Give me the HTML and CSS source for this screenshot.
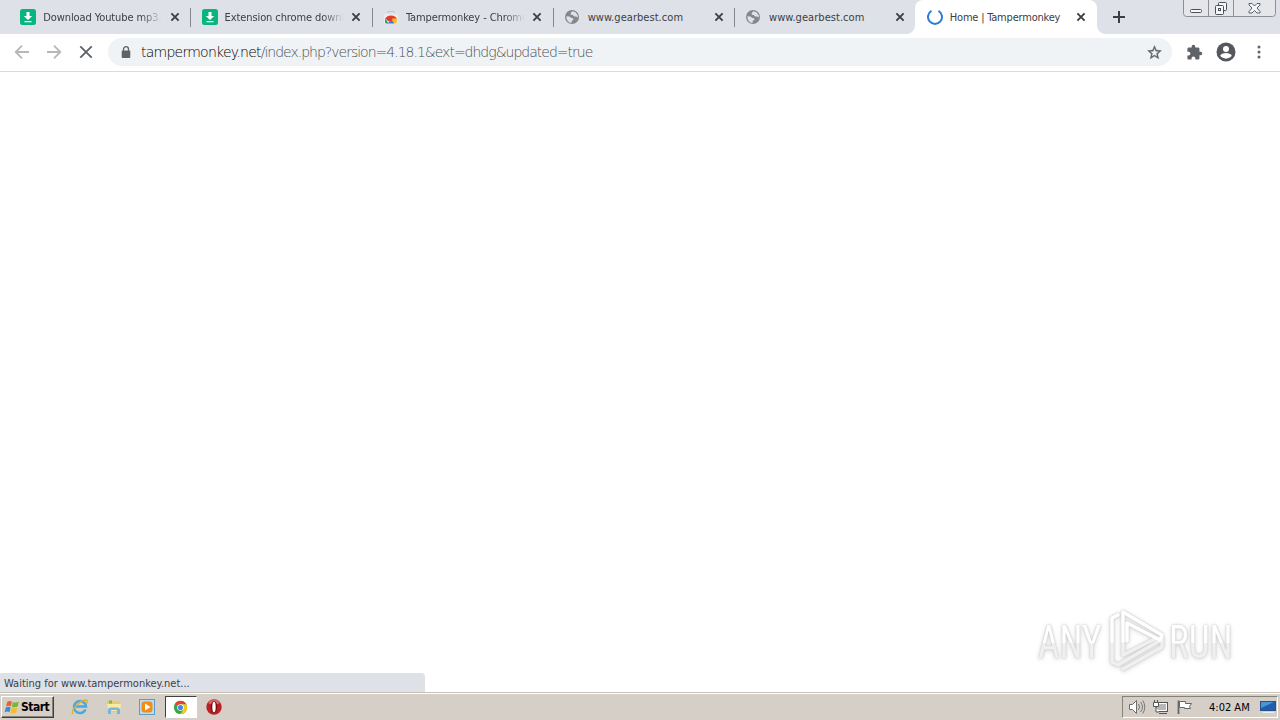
FILE: index.html
```html
<!DOCTYPE html>
<html lang="en">
<head>
  <meta charset="UTF-8">
  <title>Home | Tampermonkey</title>
  <link rel="stylesheet" href="styles.css">
</head>
<body>
  <svg class="defs" width="0" height="0">
    <symbol id="close" viewBox="0 0 10 10"><path d="M1.4 1.4l7.2 7.2M8.6 1.4L1.4 8.6" fill="none" stroke="#3c4043" stroke-width="1.9"/></symbol>
    <symbol id="download" viewBox="0 0 16 16"><rect width="16" height="16" rx="2.5" fill="#08b67d"/><path d="M6.5 3h3v4h2.7L8 11 3.8 7h2.7zM4.5 12h7v1.2h-7z" fill="#fff"/></symbol>
    <symbol id="globe" viewBox="0 0 16 16"><circle cx="8" cy="8" r="7" fill="#85888b"/><path d="M2.4 7.2l3 .2 2 1.6 1.9.3.1 1.5-1.6 1-.3 2.1C4.7 13.7 2.2 11.3 2.4 7.2zM8.3 2.3l3.2.9 2.3 3.2-.1 2.2-1.7-1.2-1.7.2-1.6-1.5-2-.4.2-1.9z" fill="#dee1e6"/></symbol>
  </svg>

  <div class="tabstrip">
    <div class="tab">
      <svg class="favicon"><use href="#download"/></svg>
      <span class="title fade">Download Youtube mp3,</span>
      <svg class="close"><use href="#close"/></svg>
    </div>
    <div class="tab">
      <svg class="favicon"><use href="#download"/></svg>
      <span class="title fade">Extension chrome downl</span>
      <svg class="close"><use href="#close"/></svg>
    </div>
    <div class="tab">
      <svg class="favicon" viewBox="0 0 16 16"><path d="M1 5h14v8.5a1.5 1.5 0 0 1-1.5 1.5h-11A1.5 1.5 0 0 1 1 13.5z" fill="#e9ebed"/><path d="M5 4V2.5h6V4" fill="none" stroke="#c2c5c9"/><path d="M2.3 9.5a6.5 5.5 0 0 1 11.5 0L11 12H5z" fill="#e23b2e"/><path d="M2.3 9.5l3.2 5H3a2 2 0 0 1-1-2z" fill="#23a455"/><path d="M9.5 9.5h4.3l.2 3.5-1.5 1.5H9z" fill="#fbc116"/><path d="M5.2 14.5a2.9 3.4 0 0 1 5.7 0z" fill="#397be6"/></svg>
      <span class="title fade">Tampermonkey - Chrome</span>
      <svg class="close"><use href="#close"/></svg>
    </div>
    <div class="tab">
      <svg class="favicon"><use href="#globe"/></svg>
      <span class="title wide">www.gearbest.com</span>
      <svg class="close"><use href="#close"/></svg>
    </div>
    <div class="tab">
      <svg class="favicon"><use href="#globe"/></svg>
      <span class="title wide">www.gearbest.com</span>
      <svg class="close"><use href="#close"/></svg>
    </div>
    <div class="tab active">
      <svg class="favicon" viewBox="0 0 16 16"><path d="M4.5 1.9A7 7 0 1 0 11.5 1.9" fill="none" stroke="#2f7bd6" stroke-width="2"/></svg>
      <span class="title">Home | Tampermonkey</span>
      <svg class="close"><use href="#close"/></svg>
    </div>
    <svg class="newtab" viewBox="0 0 12 12"><path d="M6 0v12M0 6h12" stroke="#3c4043" stroke-width="2"/></svg>
    <div class="window-buttons">
      <svg viewBox="0 0 93 17">
        <path d="M.5 0v13.5q0 3 3 3h86q3 0 3-3V0M25.5 0v16M50.5 0v16" fill="none" stroke="#8b8f98"/>
        <g fill="#f5f6f8" stroke="#4b505b">
          <rect x="7.5" y="9.5" width="11" height="3" rx="1"/>
          <rect x="35.5" y="2.5" width="8" height="8" rx="1"/>
          <rect x="32.5" y="5.5" width="8" height="9" rx="1"/>
          <rect x="35.5" y="8.5" width="2" height="2"/>
          <path d="M66 3.5h3l2.5 2.5L74 3.5h3v1.5L74 8l3 3.5V13h-3l-2.5-2.5L69 13h-3v-1.5L69 8l-3-3z" stroke-width=".9"/>
        </g>
      </svg>
    </div>
  </div>

  <div class="toolbar">
    <svg class="nav" viewBox="0 0 16 16"><path d="M15 8H2M8 1.7L1.7 8 8 14.3" fill="none" stroke="#b5b7b9" stroke-width="1.8"/></svg>
    <svg class="nav" viewBox="0 0 16 16"><path d="M1 8h13M8 1.7L14.3 8 8 14.3" fill="none" stroke="#b5b7b9" stroke-width="1.8"/></svg>
    <svg class="nav" viewBox="0 0 16 16"><path d="M2.3 2.3l11.4 11.4M13.7 2.3L2.3 13.7" fill="none" stroke="#5f6368" stroke-width="1.9"/></svg>
    <div class="omnibox">
      <svg class="lock" viewBox="0 0 10 13"><path d="M2.5 5V3.2a2.5 2.5 0 0 1 5 0V5" fill="none" stroke="#5f6368" stroke-width="1.3"/><rect x=".7" y="4.5" width="8.6" height="7.5" rx="1" fill="#5f6368"/></svg>
      <div class="url"><span class="host">tampermonkey.net</span><span class="path">/index.php?version=4.18.1&amp;ext=dhdg&amp;updated=true</span></div>
      <svg class="star" viewBox="0 0 24 24"><path d="M22 9.24l-7.19-.62L12 2 9.19 8.63 2 9.24l5.46 4.73L5.82 21 12 17.27 18.18 21l-1.63-7.03zM12 15.4l-3.76 2.27 1-4.28-3.32-2.88 4.38-.38L12 6.1l1.71 4.04 4.38.38-3.32 2.88 1 4.28z" fill="#5f6368" stroke="#5f6368" stroke-width=".4"/></svg>
    </div>
    <svg class="puzzle" viewBox="0 0 24 24"><path d="M20.5 11H19V7c0-1.100-.9-2-2-2h-4V3.500a2.500 2.500 0 0 0-5 0V5H4c-1.100 0-1.990.9-1.990 2v3.800H3.500a2.700 2.700 0 0 1 0 5.400H2V20c0 1.100.9 2 2 2h3.800v-1.500a2.700 2.700 0 0 1 5.400 0V22H17c1.100 0 2-.9 2-2v-4h1.500a2.500 2.500 0 0 0 0-5z" fill="#5f6368"/></svg>
    <svg class="profile" viewBox="0 0 20 20"><circle cx="10" cy="10" r="9.5" fill="#54585d"/><circle cx="10" cy="7" r="3" fill="#fff"/><path d="M4.2 13.7c1.4-3.6 10.2-3.6 11.6 0A7.2 7.2 0 0 1 4.2 13.7z" fill="#fff"/></svg>
    <svg class="more" viewBox="0 0 4 14"><g fill="#5f6368"><circle cx="2" cy="2" r="1.5"/><circle cx="2" cy="7" r="1.5"/><circle cx="2" cy="12" r="1.5"/></g></svg>
  </div>

  <div class="page">
    <div class="watermark">
      <span class="any">ANY</span>
      <svg viewBox="0 0 58 64">
        <g fill="none" stroke-width="3.5" stroke-linejoin="round" stroke-linecap="round">
          <path d="M4 32v21l6 3 41-24M15 32v14l34-17M15 60l39-22v-9" stroke="#f0f0f0"/>
          <path d="M15 32V3l39 23-2 5-33-17v18M4 32V9l6-3" stroke="#fff"/>
        </g>
      </svg>
      <span class="run">RUN</span>
    </div>
    <div class="status"><span>Waiting for www.tampermonkey.net...</span></div>
  </div>

  <div class="taskbar">
    <div class="start">
      <svg viewBox="0 0 17 16"><path d="M3.5 2.5Q6 .8 8.5 2.2L7.3 7.3Q5 6 2.2 7.5z" fill="#e8642a"/><path d="M9.5 2.6Q12.5 4 15.8 2.2L14.5 7.5Q11.5 9 8.3 7.7z" fill="#76b63c"/><path d="M2 8.5Q4.8 7 7 8.4L5.8 13.5Q3.5 12 .7 13.5z" fill="#3e87d4"/><path d="M8 8.8Q11 10 14.2 8.6L13 13.8Q9.8 15.5 6.8 14z" fill="#f5bd2b"/></svg>
      <span>Start</span>
    </div>
    <div class="launch">
      <svg viewBox="0 0 18 18"><path d="M14.5 11.5A6 6 0 1 1 15 8.5H5" fill="none" stroke="#4aa9de" stroke-width="2.5"/><path d="M2 16C-1 13 8 2.500 15 2c2 0 1.500 2 .8 3.500" fill="none" stroke="#e6ae28" stroke-width="1.3"/></svg>
    </div>
    <div class="launch">
      <svg viewBox="0 0 18 18"><path d="M2 3l5-1 1 1.500h7V14H2z" fill="#e9ca6b"/><path d="M4 2.500h3v3H4z" fill="#79b85a"/><path d="M2 6h14l-1 7H3z" fill="#faeaa1"/><path d="M3 16v-5l2-1.500h8l2 1.500v5h-3v-4H6v4z" fill="#74b7df"/></svg>
    </div>
    <div class="launch">
      <svg viewBox="0 0 18 18"><rect x="1.5" y="1.5" width="15" height="15" fill="#b9dcf4" stroke="#5b9dce"/><rect x="3.5" y="3.5" width="11" height="11" rx="3" fill="#f48b13"/><path d="M7 5.500v7L12.500 9z" fill="#fff"/></svg>
    </div>
    <div class="launch pressed">
      <svg viewBox="0 0 18 18"><circle cx="9" cy="9" r="7" fill="#37a64b"/><path d="M9 9L2.900 5.500A7 7 0 0 1 15.100 5.500H9z" fill="#df4435"/><path d="M9 5.500h6.100A7 7 0 0 1 9 16l3-5z" fill="#fbc71d"/><circle cx="9" cy="9" r="3.5" fill="#fff"/><circle cx="9" cy="9" r="2.7" fill="#4486e8"/></svg>
    </div>
    <div class="launch">
      <svg viewBox="0 0 18 18"><circle cx="9" cy="9" r="7.7" fill="#bb2023"/><path d="M3 5a7 7 0 0 1 12 0q-6 3-12 0z" fill="#d9696a"/><ellipse cx="9" cy="9" rx="3.2" ry="6" fill="#7a0b0e"/><ellipse cx="9" cy="9" rx="1.7" ry="5.3" fill="#fff"/></svg>
    </div>
    <div class="tray">
      <svg class="sound" viewBox="0 0 18 16"><path d="M1.5 5.5h3l4-4v13l-4-4h-3z" fill="#fff" stroke="#6d6d6d"/><path d="M10.5 5q2 3 0 6M12.5 3q4 5 0 10M14.8 1.5q4 6.5 0 13" fill="none" stroke="#777"/></svg>
      <svg class="network" viewBox="0 0 18 16"><rect x="4.5" y="3.5" width="11" height="9" fill="#b7b7b7" stroke="#555"/><path d="M5.5 4.5h9v7h-9" fill="none" stroke="#fff"/><path d="M7 14.5h8" stroke="#555"/><path d="M1.5 3.5h5v4h-5zM2.5 1v2M5.5 1v2M4 8v5h3" fill="#fff" stroke="#555"/></svg>
      <svg class="flag" viewBox="0 0 18 16"><path d="M2.5 15V1.5" stroke="#666" stroke-width="1.8"/><path d="M3.5 2.5h6v2h6l-2 3 1 2H8.5v-1h-5z" fill="#fff" stroke="#666"/></svg>
      <span>4:02 AM</span>
      <svg class="desktop" viewBox="0 0 16 14"><rect x=".5" y="1.5" width="15" height="9" fill="#1c5fae" stroke="#2b4f87"/><path d="M1 2h13L1 8z" fill="#4c94d8"/><path d="M3 12.5h11" stroke="#e9eef4"/></svg>
    </div>
  </div>
</body>
</html>
```

FILE: styles.css
```css
* {
  box-sizing: border-box;
}
body {
  margin: 0;
  height: 720px;
  display: flex;
  flex-direction: column;
  overflow: hidden;
  background: #fff;
  font-family: "DejaVu Sans Condensed", "DejaVu Sans", sans-serif;
  font-stretch: condensed;
  font-size: 11px;
  color: #3c4043;
}
svg {
  display: block;
  flex-shrink: 0;
}
.defs {
  position: absolute;
}

/* tabs */
.tabstrip {
  display: flex;
  align-items: center;
  height: 34px;
  flex-shrink: 0;
  padding-left: 9px;
  background: #dee1e7;
}
.tab {
  display: flex;
  align-items: center;
  width: 181.3px;
  height: 34px;
  padding-left: 11.3px;
  flex-shrink: 0;
  position: relative;
}
.tab::after {
  content: "";
  position: absolute;
  right: -1px;
  top: 8px;
  width: 1px;
  height: 19px;
  background: #85888e;
}
.tab:nth-child(5)::after {
  display: none;
}
.favicon {
  width: 16px;
  height: 16px;
}
.title {
  width: 126.5px;
  margin-left: 7px;
  overflow: hidden;
  white-space: nowrap;
  letter-spacing: -0.2px;
}
.wide {
  padding-left: 0.5px;
  letter-spacing: 0.05px;
}
.fade {
  letter-spacing: -0.1px;
  -webkit-mask-image: linear-gradient(90deg, #000 98px, transparent 119px);
  mask-image: linear-gradient(90deg, #000 98px, transparent 119px);
}
.close {
  width: 10px;
  height: 10px;
}
.tab.active {
  width: 182px;
  background: #fff;
  border-radius: 8px 8px 0 0;
}
.active::before,
.tab.active::after {
  content: "";
  position: absolute;
  top: auto;
  bottom: 0;
  width: 8px;
  height: 8px;
}
.active::before {
  left: -8px;
  background: radial-gradient(circle at 0 0, transparent 7.5px, #fff 8px);
}
.tab.active::after {
  right: -8px;
  background: radial-gradient(circle at 100% 0, transparent 7.5px, #fff 8px);
}
.newtab {
  width: 12px;
  height: 12px;
  margin-left: 15.5px;
}
.window-buttons {
  align-self: flex-start;
  width: 93px;
  margin-left: auto;
  margin-right: 4px;
  background: #e4e6ea;
  border-radius: 0 0 4px 4px;
}

/* toolbar */
.toolbar {
  display: flex;
  align-items: center;
  height: 38px;
  flex-shrink: 0;
  padding: 0 0 1px 14px;
  border-bottom: 1px solid #d9dbdd;
}
.nav {
  width: 16px;
  height: 16px;
  margin-right: 16px;
}
.omnibox {
  display: flex;
  align-items: center;
  width: 1064px;
  height: 28px;
  margin-left: -2px;
  padding: 0 9.5px 0 13px;
  background: #f0f3f5;
  border-radius: 14px;
}
.lock {
  width: 10px;
  height: 13px;
}
.url {
  flex: 1;
  margin-left: 10px;
  font-family: "DejaVu Sans Light", "DejaVu Sans", sans-serif;
  font-size: 14px;
  font-weight: 200;
  white-space: nowrap;
  letter-spacing: -1px;
  color: #4c5054;
}
.host {
  letter-spacing: -0.75px;
  color: #000;
}
.star {
  width: 17px;
  height: 17px;
}
.puzzle {
  width: 17px;
  height: 17px;
  margin-left: 13.5px;
}
.profile {
  width: 20px;
  height: 20px;
  margin-left: 13.5px;
}
.more {
  width: 4px;
  height: 14px;
  margin-left: 20.5px;
}

/* page */
.page {
  flex: 1;
  position: relative;
}
.watermark {
  position: absolute;
  left: 1038px;
  top: 536px;
  height: 66px;
  display: flex;
  align-items: center;
  color: #fff;
  font-family: Roboto, sans-serif;
  font-size: 47px;
  filter: drop-shadow(0 0 1px #c4c4c4) drop-shadow(0 1px 2px #ddd);
}
.watermark span {
  white-space: nowrap;
  transform: scaleX(0.79);
  transform-origin: left;
  /* bottom half of the lettering is slightly greyer */
  color: transparent;
  background: linear-gradient(#fff 52%, #f0f0f0 52%);
  -webkit-background-clip: text;
  background-clip: text;
}
.watermark .any {
  width: 84px;
  margin-right: -14px;
}
.watermark .run {
  width: 90px;
  margin-left: 2.5px;
}
.watermark svg {
  width: 58px;
  height: 64px;
}
.status {
  position: absolute;
  left: 0;
  bottom: 0;
  width: 425px;
  height: 19px;
  padding-left: 4px;
  line-height: 21px;
  background: #dee1e7;
  border-top-right-radius: 4px;
}

/* taskbar */
.taskbar {
  display: flex;
  align-items: center;
  height: 28px;
  flex-shrink: 0;
  padding: 1px 2px 0 1px;
  background: #d6cfc7;
  border-top: 1px solid #c5c2b8;
  box-shadow: inset 0 1px #fff;
  color: #000;
}
.start {
  display: flex;
  align-items: center;
  gap: 1px;
  width: 53px;
  height: 22px;
  margin-right: 10px;
  padding-left: 2px;
  border: 1px solid;
  border-color: #fff #404040 #404040 #fff;
  box-shadow: inset -1px -1px #85817b;
  font-size: 12px;
  font-weight: bold;
  letter-spacing: -0.5px;
}
.start svg {
  width: 16px;
  height: 16px;
}
.launch {
  display: flex;
  align-items: center;
  justify-content: center;
  width: 32px;
  height: 22px;
  margin-right: 1.6px;
}
.launch svg {
  width: 18px;
  height: 18px;
}
.pressed {
  background: #fff;
  border: 1px solid;
  border-color: #404040 #fff #fff #404040;
}
.pressed svg {
  width: 17px;
  height: 17px;
}
.tray {
  display: flex;
  align-items: center;
  width: 156px;
  height: 22px;
  margin-left: auto;
  padding-left: 5px;
  border: 1px solid;
  border-color: #85817b #fff #fff #85817b;
}
.tray svg {
  width: 18px;
  height: 16px;
}
.tray .network,
.tray .flag {
  margin-left: 6px;
}
.tray span {
  width: 42px;
  margin-left: 15px;
  white-space: nowrap;
}
.tray .desktop {
  width: 16px;
  height: 14px;
  margin-left: 9px;
}
```
